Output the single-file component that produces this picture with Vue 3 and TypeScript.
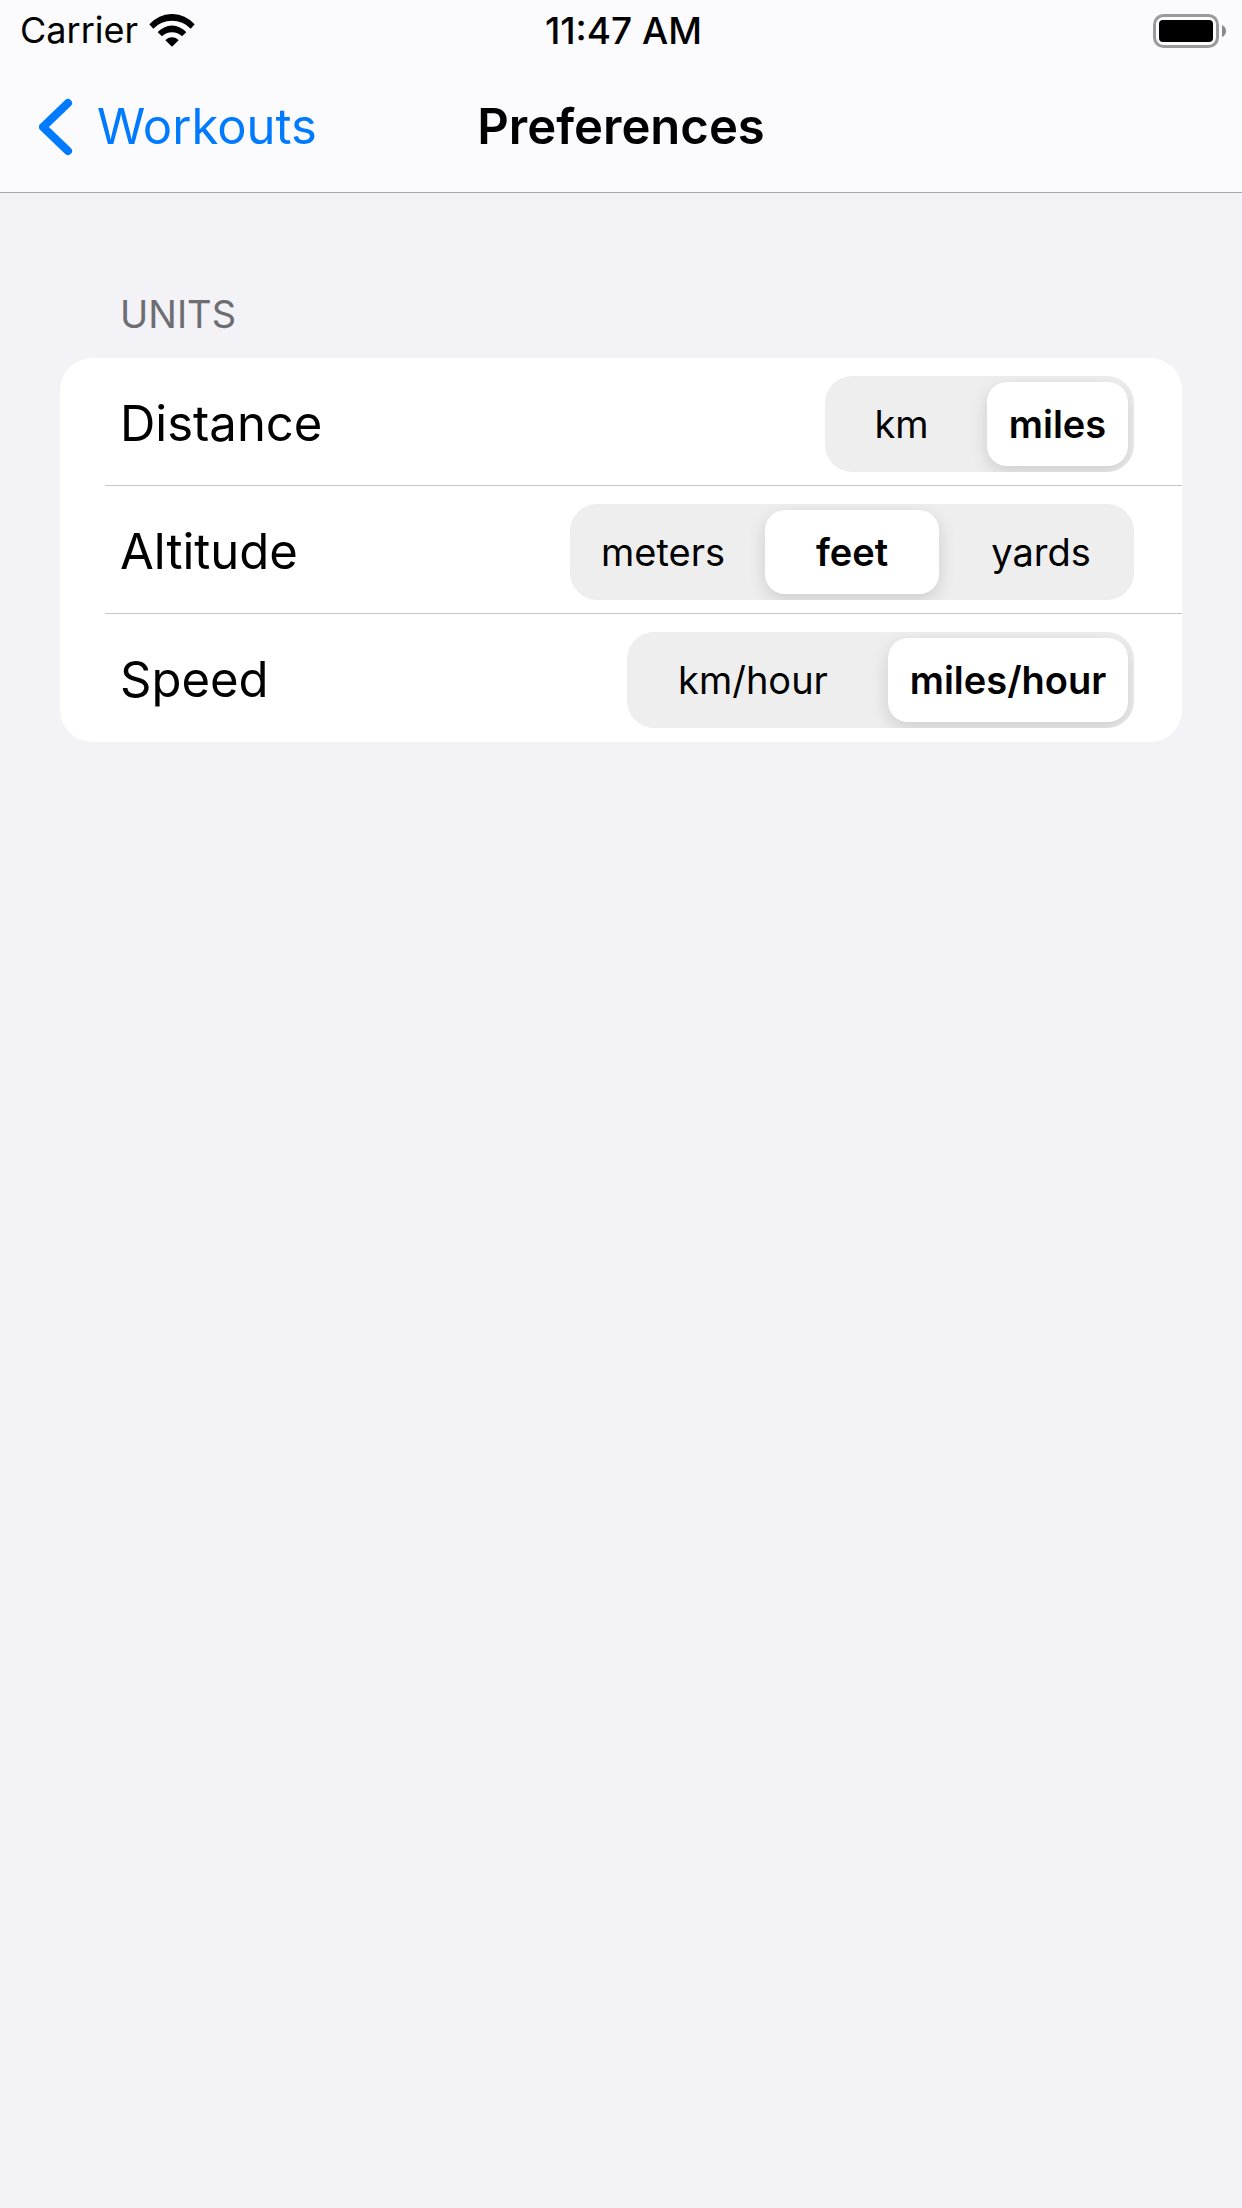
<script setup lang="ts">
import { reactive } from 'vue'

interface UnitSetting {
  id: string
  label: string
  options: string[]
  segmentWidth: number
}

const settings: UnitSetting[] = [
  { id: 'distance', label: 'Distance', options: ['km', 'miles'], segmentWidth: 141 },
  { id: 'altitude', label: 'Altitude', options: ['meters', 'feet', 'yards'], segmentWidth: 174 },
  { id: 'speed', label: 'Speed', options: ['km/hour', 'miles/hour'], segmentWidth: 240 },
]

const selected = reactive<Record<string, string>>({
  distance: 'miles',
  altitude: 'feet',
  speed: 'miles/hour',
})
</script>

<template>
  <div class="screen">
    <header class="top">
      <div class="status">
        <div class="carrier">
          <span>Carrier</span>
          <svg class="wifi" viewBox="0 0 138 99" aria-hidden="true">
            <path d="M1 31A90 90 0 0 1 137 31L125 44A78 78 0 0 0 13 44Z" />
            <path d="M26 55A56 56 0 0 1 112 55L99 67A43 43 0 0 0 39 67Z" />
            <path d="M49 79A26 26 0 0 1 89 79L69 98Z" />
          </svg>
        </div>
        <time class="clock">11:47 AM</time>
        <svg class="battery" viewBox="0 0 74 34" aria-hidden="true">
          <rect x="1.5" y="1.5" width="63" height="31" rx="9" fill="none" stroke="#9a9a9b" stroke-width="3" />
          <rect x="6" y="6" width="54" height="22" rx="4" />
          <path d="M69 11Q73 13 73 17T69 23Z" fill="#8a8a8b" />
        </svg>
      </div>
      <nav class="bar">
        <a class="back" href="#workouts">
          <svg class="chevron" viewBox="0 0 34 58" aria-hidden="true">
            <path d="M29 5L4 29L29 53" />
          </svg>
          <span>Workouts</span>
        </a>
        <h1 class="title">Preferences</h1>
      </nav>
    </header>

    <main class="content">
      <h2 class="section-title">UNITS</h2>
      <div class="card">
        <div v-for="s in settings" :key="s.id" class="row">
          <span :id="s.id + '-label'" class="row-label">{{ s.label }}</span>
          <div
            class="segments"
            role="radiogroup"
            :aria-labelledby="s.id + '-label'"
            :style="{ gridAutoColumns: s.segmentWidth + 'px' }"
          >
            <label
              v-for="o in s.options"
              :key="o"
              class="segment"
              :class="{ active: selected[s.id] === o }"
            >
              <input v-model="selected[s.id]" class="radio" type="radio" :name="s.id" :value="o" />
              <span>{{ o }}</span>
            </label>
          </div>
        </div>
      </div>
    </main>
  </div>
</template>

<style>
html,
body {
  background: #f2f2f7;
}
</style>

<style scoped>
.screen {
  min-height: 100vh;
  background: #f2f2f7;
  color: #000;
  font-family: Inter, 'Liberation Sans', sans-serif;
}

.top {
  background: #fbfbfd;
  border-bottom: 1px solid #a9a9ad;
}

.status,
.bar {
  display: grid;
  grid-template-columns: 1fr auto 1fr;
  align-items: center;
}

.status {
  height: 61px;
  padding: 0 15px 0 20px;
  font-size: 36px;
  line-height: 45px;
}

.carrier {
  display: flex;
  align-items: center;
  gap: 11px;
}

.wifi {
  width: 46px;
  height: 33px;
}

.clock {
  font-size: 37px;
  font-weight: 500;
}

.battery {
  width: 74px;
  height: 34px;
  justify-self: end;
}

.bar {
  height: 131px;
  padding: 0 39px;
  font-size: 49px;
  line-height: 60px;
}

.back {
  display: flex;
  align-items: center;
  justify-self: start;
  gap: 24px;
  color: #007aff;
  text-decoration: none;
}

.chevron {
  width: 34px;
  height: 58px;
  fill: none;
  stroke: currentColor;
  stroke-width: 8;
  stroke-linecap: round;
  stroke-linejoin: round;
}

.title {
  margin: 0;
  font-size: 49px;
  font-weight: 600;
}

.content {
  padding: 97px 60px 0;
}

.section-title {
  margin: 0 0 20px;
  padding-left: 60px;
  color: #6d6d72;
  font-size: 38px;
  font-weight: 400;
  line-height: 48px;
}

.card {
  padding-left: 45px;
  border-radius: 32px;
  background: #fff;
}

.row {
  display: flex;
  align-items: center;
  justify-content: space-between;
  padding: 18px 48px 13px 15px;
  border-bottom: 1px solid #c6c6c8;
}

.row:last-child {
  border-bottom-color: transparent;
}

.row-label {
  font-size: 49px;
  line-height: 60px;
}

.segments {
  display: grid;
  grid-auto-flow: column;
  gap: 15px;
  padding: 6px;
  border-radius: 27px;
  background: #eee;
  overflow: hidden;
}

.segment {
  position: relative;
  display: flex;
  align-items: center;
  justify-content: center;
  height: 84px;
  border-radius: 20px;
  font-size: 38px;
  line-height: 48px;
  cursor: pointer;
}

.segment.active {
  background: #fff;
  box-shadow: 0 6px 18px rgba(0, 0, 0, 0.14);
  font-weight: 600;
}

.radio {
  position: absolute;
  inset: 0;
  width: 100%;
  height: 100%;
  margin: 0;
  opacity: 0;
  cursor: pointer;
}
</style>
